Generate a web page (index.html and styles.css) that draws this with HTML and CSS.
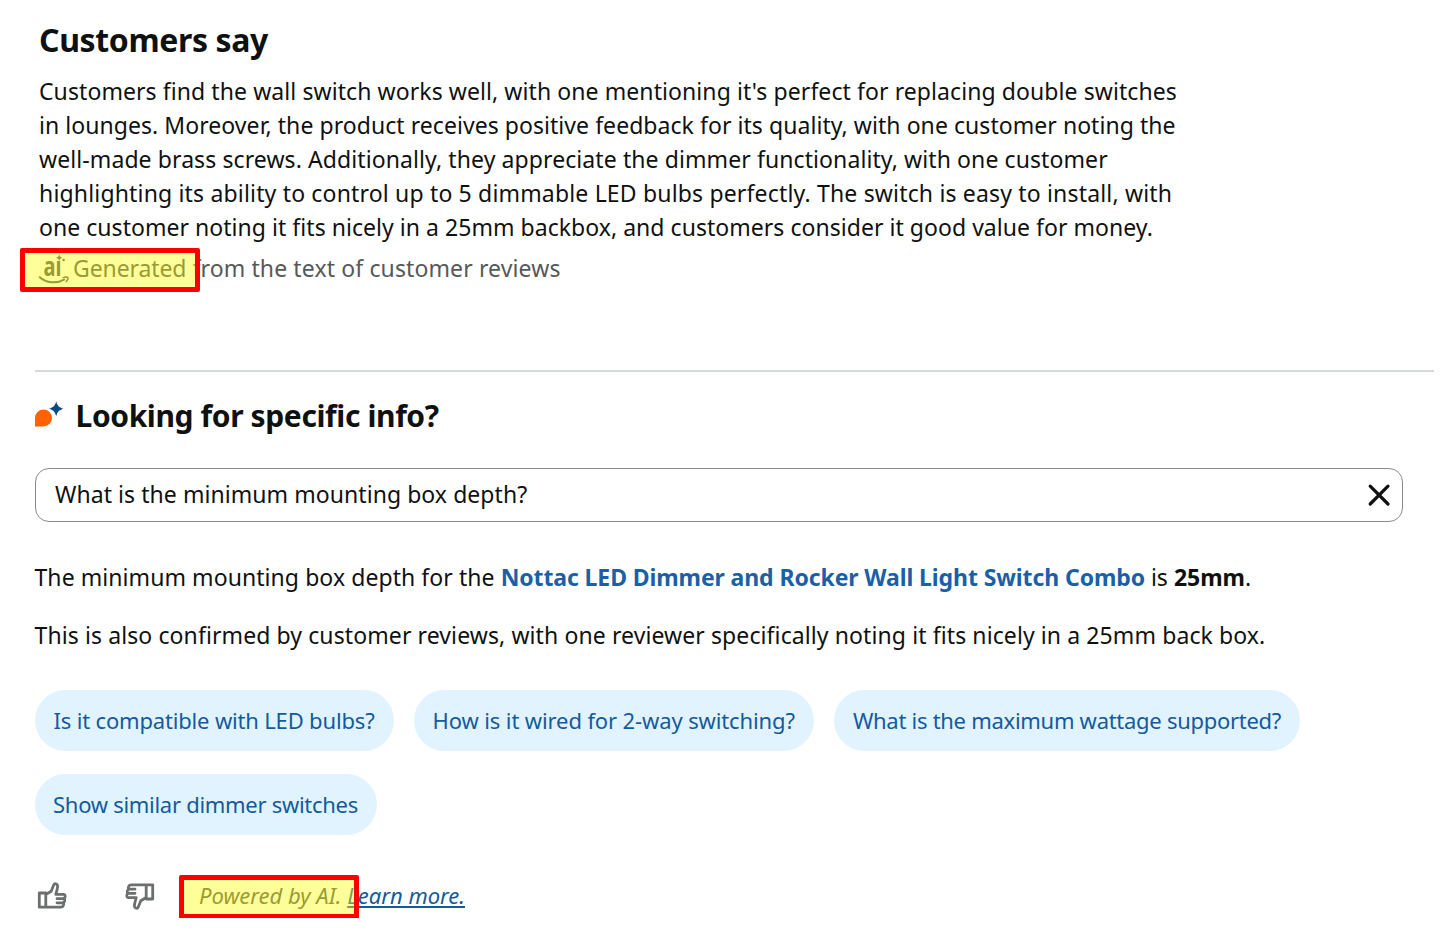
FILE: index.html
```html
<!DOCTYPE html>
<html lang="en">
<head>
    <meta charset="UTF-8">
    <meta name="viewport" content="width=device-width, initial-scale=1.0">
    <title>Customers say</title>
    <link rel="stylesheet" href="styles.css">
</head>
<body>
    <section class="summary">
        <h2 class="summary-title">Customers say</h2>
        <p class="summary-text">
            <span class="line line-1">Customers find the wall switch works well, with one mentioning it's perfect for replacing double switches</span>
            <span class="line line-2">in lounges. Moreover, the product receives positive feedback for its quality, with one customer noting the</span>
            <span class="line line-3">well-made brass screws. Additionally, they appreciate the dimmer functionality, with one customer</span>
            <span class="line line-4">highlighting its ability to control up to 5 dimmable LED bulbs perfectly. The switch is easy to install, with</span>
            <span class="line line-5">one customer noting it fits nicely in a 25mm backbox, and customers consider it good value for money.</span>
        </p>
        <div class="generated">
            <svg class="ai-icon" width="32" height="30" viewBox="0 0 32 30">
                <text class="ai-text" x="4.5" y="22" textLength="18" lengthAdjust="spacingAndGlyphs">aı</text>
                <path d="M20.2 0.5l1 2.2 2.2 1-2.2 1-1 2.2-1-2.2-2.2-1 2.2-1z" class="ai-star"/>
                <circle cx="24.6" cy="6" r="1.2" class="ai-star"/>
                <path d="M0.8 23.2C7 29 18 29.8 25 25.6" class="ai-smile"/>
                <path d="M24.3 23.6c2-.7 4-.7 4.5-.2.4.8-.4 2.7-1.6 4" class="ai-smile ai-smile-tip"/>
            </svg>
            <span class="generated-text"><span class="generated-word">Generated</span> from the text of customer reviews</span>
            <span class="highlight"></span>
        </div>
    </section>

    <section class="ask">
        <div class="ask-header">
            <svg class="ask-icon" width="30" height="28" viewBox="0 0 30 28">
                <path d="M0 26.5V18a8.5 8.5 0 1 1 8.5 8.5z" fill="#ff6200"/>
                <path d="M21.2 1.2C22.5 6 23.8 7.2 28.4 8.7 23.8 10.2 22.5 11.5 21.2 16.2 19.9 11.5 18.6 10.2 14 8.7 18.6 7.2 19.9 6 21.2 1.2z" fill="#0a4a82"/>
            </svg>
            <h2 class="ask-title">Looking for specific info?</h2>
        </div>

        <div class="question">
            <span class="question-text">What is the minimum mounting box depth?</span>
            <svg width="24" height="24" viewBox="0 0 24 24">
                <path d="M3.2 3.2l17.8 17.8M21 3.2L3.2 21" fill="none" stroke="#0f1111" stroke-width="3.2" stroke-linecap="round"/>
            </svg>
        </div>

        <p class="answer answer-1"><span class="answer-a">The minimum mounting box depth for the</span> <a class="product" href="#">Nottac LED Dimmer and Rocker Wall Light Switch Combo</a> is <b>25mm</b>.</p>
        <p class="answer answer-2">This is also confirmed by customer reviews, with one reviewer specifically noting it fits nicely in a 25mm back box.</p>

        <div class="chips">
            <button class="chip chip-1">Is it compatible with LED bulbs?</button>
            <button class="chip chip-2">How is it wired for 2-way switching?</button>
            <button class="chip chip-3">What is the maximum wattage supported?</button>
            <button class="chip chip-4">Show similar dimmer switches</button>
        </div>

        <div class="feedback">
            <svg class="thumb" width="32" height="30" viewBox="0 0 32 30">
                <path d="M3.3 12h6.5v14.2H3.3zM9.8 13.5l5.4-3.3 2.6-6.4c.9-1.9 3.8-1.2 3.8 1.1 0 2.3-.8 5-1.8 8.4h7.6c2.2 0 2.4 3.3.6 4.3 1.3 1.2.9 3.3-.6 4 .8 1.8-.2 4.6-2.4 4.6H9.8M21 17.7h6.5M21 21.8h6" class="thumb-line"/>
            </svg>
            <svg class="thumb thumb-down" width="32" height="30" viewBox="0 0 32 30">
                <path d="M3.3 12h6.5v14.2H3.3zM9.8 13.5l5.4-3.3 2.6-6.4c.9-1.9 3.8-1.2 3.8 1.1 0 2.3-.8 5-1.8 8.4h7.6c2.2 0 2.4 3.3.6 4.3 1.3 1.2.9 3.3-.6 4 .8 1.8-.2 4.6-2.4 4.6H9.8M21 17.7h6.5M21 21.8h6" class="thumb-line"/>
            </svg>
            <span class="powered">Powered by AI. <a class="learn" href="#">Learn more.</a><span class="highlight highlight-ai"></span></span>
        </div>
    </section>
</body>
</html>
```

FILE: styles.css
```css
body {
    margin: 0;
    background-color: #fff;
    color: #0f1111;
    font-family: "Noto Sans", "Open Sans", sans-serif;
    font-size: 23px;
}
h2, p {
    margin: 0;
}
.summary {
    box-sizing: border-box;
    padding: 20px 0 0 39px;
    height: 370px;
}
.summary-title {
    font-size: 32px;
    line-height: 40px;
    letter-spacing: -0.37px;
}
.summary-text {
    margin-top: 13.6px;
    line-height: 34.2px;
}
.line {
    display: block;
    white-space: nowrap;
}
.line-1 {
    letter-spacing: 0.082px;
}
.line-2 {
    letter-spacing: 0.055px;
}
.line-3 {
    letter-spacing: 0.093px;
}
.line-4 {
    letter-spacing: 0.17px;
}
.line-5 {
    letter-spacing: 0.04px;
}
.generated {
    position: relative;
    display: flex;
    align-items: center;
    height: 34px;
    margin-top: 7.4px;
    color: #565959;
}
.generated-text {
    margin-top: -2px;
    letter-spacing: 0.12px;
}
.generated-word {
    letter-spacing: -0.1px;
}
.ai-icon {
    margin-right: 2px;
    overflow: visible;
}
.ai-text {
    font: bold 27px "Noto Sans", sans-serif;
    fill: #565959;
}
.ai-star {
    fill: #565959;
}
.ai-smile {
    fill: none;
    stroke: #565959;
    stroke-width: 2;
    stroke-linecap: round;
}
.ai-smile-tip {
    stroke-width: 1.5;
}
.highlight {
    position: absolute;
    left: -19px;
    top: -4px;
    width: 180px;
    height: 44px;
    box-sizing: border-box;
    border: 5px solid #f00;
    border-radius: 2px;
    background: rgba(255, 255, 0, 0.4);
}
.ask {
    margin-left: 34.5px;
    margin-right: 21px;
    border-top: 2px solid #d5d9d9;
}
.ask-header {
    display: flex;
    align-items: center;
    margin-top: 23px;
    height: 42px;
}
.ask-icon {
    margin: -5px 11px 0 0;
}
.ask-title {
    font-size: 30px;
    line-height: 42px;
    letter-spacing: -0.38px;
}
.question {
    display: flex;
    align-items: center;
    justify-content: space-between;
    box-sizing: border-box;
    width: 1368.5px;
    height: 54px;
    margin-top: 30.5px;
    padding: 0 11px 0 19.5px;
    border: 1.5px solid #888c8c;
    border-radius: 14px;
}
.question-text {
    margin-top: -1px;
    letter-spacing: 0.06px;
}
.answer {
    margin-top: 38px;
    line-height: 34px;
    white-space: nowrap;
}
.answer-a {
    letter-spacing: 0.07px;
}
.answer-2 {
    margin-top: 24px;
    letter-spacing: 0.1px;
}
.product {
    color: #1b5fa6;
    font-weight: bold;
    letter-spacing: -0.1px;
    text-decoration: none;
}
.chips {
    display: flex;
    flex-wrap: wrap;
    gap: 22.5px 20.5px;
    margin-top: 38px;
}
.chip {
    height: 61.5px;
    padding: 0;
    border: none;
    border-radius: 31px;
    background: #e0f3ff;
    color: #155a9c;
    font-family: inherit;
    font-size: 22px;
    white-space: nowrap;
}
.chip-1 {
    width: 359px;
    letter-spacing: -0.17px;
}
.chip-2 {
    width: 399.5px;
    letter-spacing: -0.12px;
}
.chip-3 {
    width: 466px;
    letter-spacing: -0.28px;
}
.chip-4 {
    width: 342px;
    letter-spacing: -0.29px;
}
.feedback {
    display: flex;
    align-items: center;
    height: 44px;
    margin-top: 38.5px;
}
.thumb {
    margin-left: 1.5px;
}
.thumb-down {
    margin-left: 56px;
    transform: rotate(180deg);
}
.thumb-line {
    fill: none;
    stroke: #6b6f6f;
    stroke-width: 2.8;
    stroke-linejoin: round;
    stroke-linecap: round;
}
.powered {
    position: relative;
    margin-left: 43px;
    margin-top: -2px;
    color: #565959;
    font-size: 22px;
    font-style: italic;
}
.learn {
    color: #155a9c;
}
.highlight-ai {
    left: -20px;
    top: -5px;
}
```
